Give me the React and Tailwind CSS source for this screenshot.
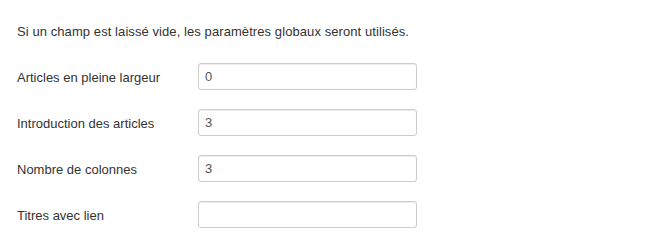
import React from 'react';

const FIELDS = [
  { id: 'num_leading', label: 'Articles en pleine largeur', value: '0' },
  { id: 'num_intro', label: 'Introduction des articles', value: '3' },
  { id: 'num_columns', label: 'Nombre de colonnes', value: '3' },
  { id: 'link_titles', label: 'Titres avec lien', value: '' },
];

export default function App() {
  return (
    <div className="w-[650px] h-[250px] bg-white text-[#333333] text-[13px] leading-[18px] font-['Liberation_Sans',Arial,sans-serif] pl-[17px] pt-[23px]">
      <p className="tracking-[0.08px]">Si un champ est laissé vide, les paramètres globaux seront utilisés.</p>

      <div className="mt-[22px] flex flex-col gap-[19px]">
        {FIELDS.map(f => (
          <div key={f.id} className="flex items-center">
            <label htmlFor={f.id} className="w-[181px] pt-[2px]">{f.label}</label>
            <input
              id={f.id}
              type="text"
              defaultValue={f.value}
              className="w-[219px] h-[27px] px-[6px] border border-[#cccccc] rounded-[3px] text-[13px] text-[#555555] bg-white outline-none shadow-[inset_0_1px_1px_rgba(0,0,0,0.075)]"
            />
          </div>
        ))}
      </div>
    </div>
  );
}
